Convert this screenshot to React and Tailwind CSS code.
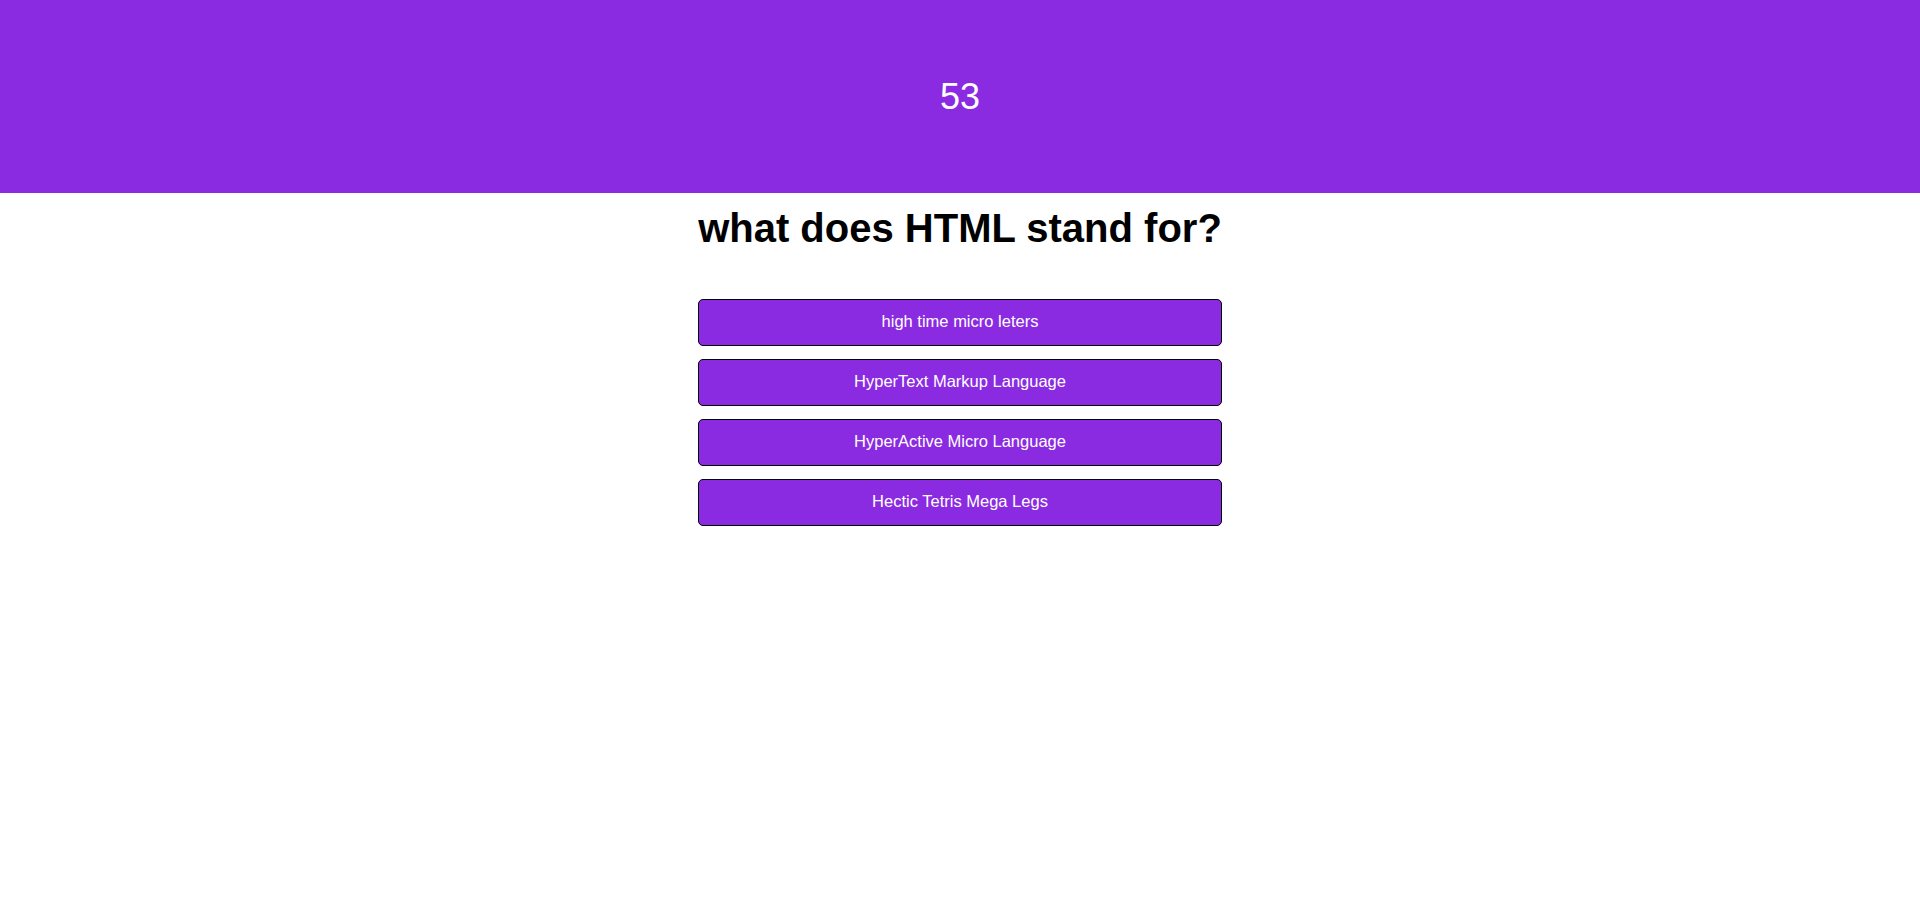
export default function App() {
  const answers = [
    "high time micro leters",
    "HyperText Markup Language",
    "HyperActive Micro Language",
    "Hectic Tetris Mega Legs",
  ];
  return (
    <div className="min-h-screen bg-white font-['Liberation_Sans',Arial,sans-serif]">
      <header className="h-[193px] bg-[#8a2be2] flex items-center justify-center">
        <span className="text-white text-[36px] leading-none">53</span>
      </header>
      <main className="w-fit mx-auto">
        <h1 className="mt-3 text-[40px] font-bold text-black leading-[46px]">
          what does HTML stand for?
        </h1>
        <div className="mt-[48px] flex flex-col gap-[13px]">
          {answers.map((a) => (
            <button
              key={a}
              className="h-[47px] w-full pb-[2px] bg-[#8a2be2] text-white text-[16.5px] border border-black rounded-[5px]"
            >
              {a}
            </button>
          ))}
        </div>
      </main>
    </div>
  );
}
